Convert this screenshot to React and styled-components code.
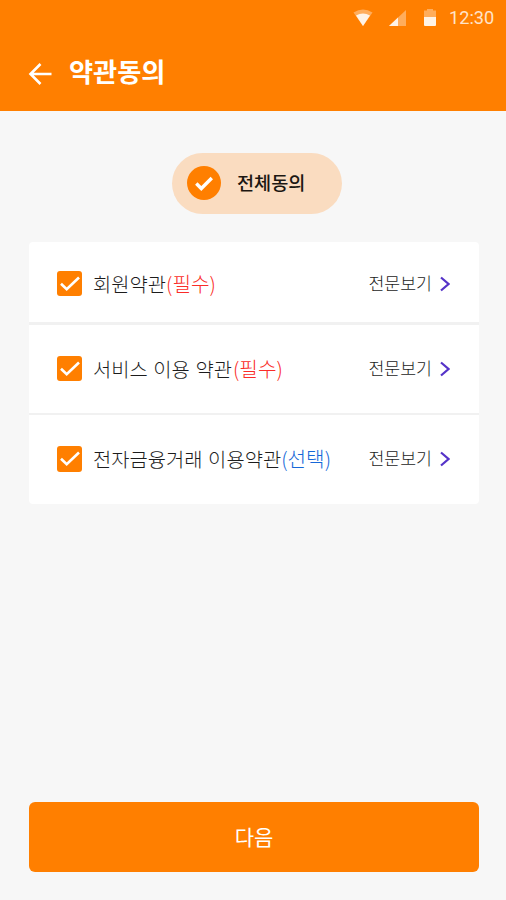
import React from "react";
import styled, { createGlobalStyle } from "styled-components";

const GlobalStyle = createGlobalStyle`
  * { box-sizing: border-box; }
  body { margin: 0; background: #f7f7f7; }
`;

const Screen = styled.div`
  width: 506px;
  height: 900px;
  display: flex;
  flex-direction: column;
  background: #f7f7f7;
  font-family: "Noto Sans CJK KR", sans-serif;
  color: #2a2a2a;
`;

const Header = styled.header`
  height: 111px;
  background: #ff7f00;
  color: #fff;
`;

const StatusBar = styled.div`
  height: 36px;
  padding-right: 11px;
  display: flex;
  justify-content: flex-end;
  align-items: center;
  svg { display: block; }
`;

const Clock = styled.span`
  width: 46px;
  margin-left: 12px;
  font: 400 18.2px/36px Roboto, sans-serif;
  color: #ffe3c8;
  white-space: nowrap;
`;

const TitleBar = styled.div`
  height: 75px;
  padding-left: 28px;
  display: flex;
  align-items: center;
  gap: 17px;
`;

const BackButton = styled.button`
  padding: 0;
  border: 0;
  background: none;
  line-height: 0;
  margin-top: 1px;
`;

const Title = styled.h1`
  margin: 0 0 5px;
  font-size: 26.2px;
  line-height: 38px;
  font-weight: 700;
`;

const Main = styled.main`
  flex: 1;
  padding: 42px 27px 28px 29px;
  display: flex;
  flex-direction: column;
`;

const AgreeAll = styled.button`
  width: 170px;
  height: 61px;
  margin-left: 143px;
  padding: 0 0 0 15px;
  border: 0;
  border-radius: 31px;
  display: flex;
  align-items: center;
  gap: 16px;
  background: #fadcc0;
  color: #1c1712;
  font: 500 18.6px/28px "Noto Sans CJK KR", sans-serif;
  svg { flex: none; margin-top: -1px; }
  span { margin-top: -4px; }
`;

const TermsCard = styled.ul`
  list-style: none;
  margin: 28px 0 0;
  padding: 0;
  height: 262px;
  border-radius: 4px;
  background: #fff;
`;

const TermRow = styled.li`
  height: ${(p) => p.$height}px;
  padding: ${(p) => p.$top}px 29px ${(p) => p.$bottom}px 27.5px;
  display: flex;
  align-items: center;
  border-bottom: ${(p) => p.$divider}px solid #f1f1f1;
`;

const CheckBox = styled.span`
  width: 25.5px;
  height: 25.5px;
  margin-right: 11px;
  border-radius: 3px;
  background: #ff7f00;
  svg { display: block; }
`;

const TermName = styled.span`
  flex: 1;
  font-size: 19.85px;
  line-height: 28px;
  font-weight: 300;
  white-space: nowrap;
  word-spacing: 1.2px;
  color: #1c1c1c;
`;

const Tag = styled.span`
  margin-left: ${(p) => p.$gap}px;
  font-size: 20.2px;
  color: ${(p) => (p.$required ? "#fa2c28" : "#1668d8")};
`;

const ViewLink = styled.a`
  display: flex;
  align-items: center;
  gap: 8px;
  font-size: 17.3px;
  line-height: 26px;
  font-weight: 300;
  color: #1c1c1c;
  white-space: nowrap;
  span { margin-top: -2px; }
`;

const NextButton = styled.button`
  height: 70px;
  margin-top: auto;
  padding: 0 0 3px;
  border: 0;
  border-radius: 6px;
  background: #ff7f00;
  color: #fff;
  font: 400 21px/30px "Noto Sans CJK KR", sans-serif;
`;

const StatusIcons = () => (
  <svg width="84" height="24" viewBox="0 0 84 24" fill="#fff3e6">
    <path d="M0.5 6.5Q10 .5 19.5 6.5L10 20Z" opacity=".4" />
    <path d="M3 9.5Q10 5.5 17 9.5L10 20Z" />
    <path d="M36 20L53 4V20Z" opacity=".4" />
    <path d="M36 20L45 11.5V20Z" />
    <path d="M71 11V4.5H74V3H80V4.5H83V11Z" opacity=".4" />
    <path d="M71 11H83V19Q83 20 82 20H72Q71 20 71 19Z" />
  </svg>
);

const BackIcon = () => (
  <svg width="24" height="24" viewBox="0 0 24 24" fill="none" stroke="#fff" strokeWidth="2.6">
    <path d="M23.5 12H2.5M12.5 2L2.5 12L12.5 22" />
  </svg>
);

const CircleCheck = () => (
  <svg width="34" height="34" viewBox="0 0 34 34">
    <circle cx="17" cy="17" r="17" fill="#ff7f00" />
    <path d="M9.3 17.5L14.3 22.5L24.8 12" fill="none" stroke="#fff" strokeWidth="3.4" />
  </svg>
);

const Check = () => (
  <svg width="25" height="25" viewBox="0 0 25 25" fill="none" stroke="#fff" strokeWidth="2.6">
    <path d="M4 12.7L9.7 18.3L22 6.5" />
  </svg>
);

const Chevron = () => (
  <svg width="10" height="16" viewBox="0 0 10 16" fill="none" stroke="#5533c8" strokeWidth="2.2">
    <path d="M1 1.5L8.5 8L1 14.5" />
  </svg>
);

const terms = [
  { name: "회원약관", required: true, height: 83, divider: 3, top: 3, bottom: 0, gap: 0 },
  { name: "서비스 이용 약관", required: true, height: 90, divider: 2, top: 0, bottom: 1, gap: 1 },
  { name: "전자금융거래 이용약관", required: false, height: 89, divider: 0, top: 0, bottom: 1, gap: 0 },
];

export default function App() {
  return (
    <>
      <GlobalStyle />
      <Screen>
        <Header>
          <StatusBar>
            <StatusIcons />
            <Clock>12:30</Clock>
          </StatusBar>
          <TitleBar>
            <BackButton aria-label="뒤로"><BackIcon /></BackButton>
            <Title>약관동의</Title>
          </TitleBar>
        </Header>
        <Main>
          <AgreeAll>
            <CircleCheck />
            <span>전체동의</span>
          </AgreeAll>
          <TermsCard>
            {terms.map((t) => (
              <TermRow key={t.name} $height={t.height} $divider={t.divider} $top={t.top} $bottom={t.bottom}>
                <CheckBox><Check /></CheckBox>
                <TermName>
                  {t.name}
                  <Tag $required={t.required} $gap={t.gap}>{t.required ? "(필수)" : "(선택)"}</Tag>
                </TermName>
                <ViewLink>
                  <span>전문보기</span>
                  <Chevron />
                </ViewLink>
              </TermRow>
            ))}
          </TermsCard>
          <NextButton>다음</NextButton>
        </Main>
      </Screen>
    </>
  );
}
